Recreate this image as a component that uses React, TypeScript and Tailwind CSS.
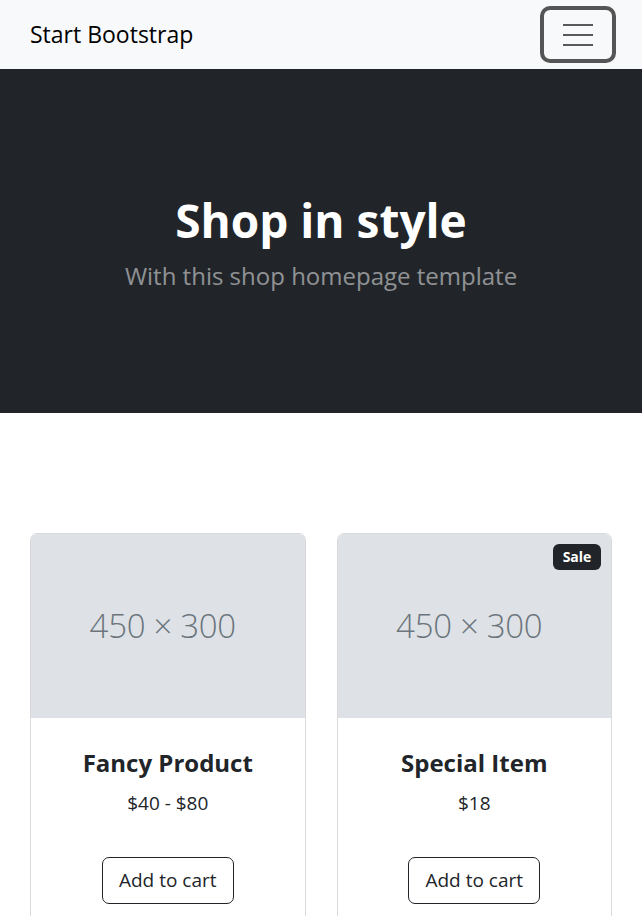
import React from "react";

const font = { fontFamily: '"Open Sans", "Noto Sans", sans-serif' };

const products = [
  { name: "Fancy Product", price: "$40 - $80", sale: false },
  { name: "Special Item", price: "$18", sale: true },
];

const ProductCard = ({
  name,
  price,
  sale,
}: {
  name: string;
  price: string;
  sale: boolean;
}) => {
  return (
    <div className="relative flex flex-col border border-[#d9d9dc] rounded-[7px] overflow-hidden bg-white">
      {sale && (
        <div className="absolute top-[10px] right-[10px] w-[48px] h-[26px] flex items-center justify-center bg-[#212529] text-white text-[14px] font-bold leading-none rounded-[6px]">
          Sale
        </div>
      )}
      <div className="h-[184px] bg-[#dee2e6] flex items-center justify-center pr-[10px]">
        <span className="text-[33px] font-light text-[#6c757d] tracking-[-0.3px]">
          450 × 300
        </span>
      </div>
      <div className="pt-[30px] flex flex-col items-center">
        <h5 className="text-[24px] font-bold leading-[30px] text-[#212529]">
          {name}
        </h5>
        <p className="mt-[10px] text-[19px] leading-[30px] text-[#212529]">
          {price}
        </p>
      </div>
      <div className="pt-[39px] pb-[30px] flex justify-center">
        <button className="border border-[#212529] rounded-[7px] px-[16px] h-[47px] text-[19px] text-[#212529]">
          Add to cart
        </button>
      </div>
    </div>
  );
};

export default function App() {
  return (
    <div className="w-[642px] min-h-[916px] bg-white" style={font}>
      <nav className="h-[69px] bg-[#f8f9fa] flex items-center justify-between pl-[30px] pr-[26px]">
        <a className="text-[23px] text-black leading-none">Start Bootstrap</a>
        <button className="w-[76px] h-[57px] border-[4px] border-[#555555] rounded-[10px] flex flex-col items-center justify-center gap-[8px]">
          <span className="block w-[30px] h-[2px] bg-[#595959]" />
          <span className="block w-[30px] h-[2px] bg-[#595959]" />
          <span className="block w-[30px] h-[2px] bg-[#595959]" />
        </button>
      </nav>

      <header className="h-[344px] bg-[#212529] flex flex-col items-center pt-[123px]">
        <h1 className="text-[46px] font-bold text-white leading-[56px]">
          Shop in style
        </h1>
        <p className="text-[24px] text-white/50 leading-[36px] mt-[10px]">
          With this shop homepage template
        </p>
      </header>

      <section className="pt-[120px] px-[30px]">
        <div className="grid grid-cols-2 gap-[31px]">
          {products.map((p) => (
            <ProductCard key={p.name} {...p} />
          ))}
        </div>
      </section>
    </div>
  );
}
